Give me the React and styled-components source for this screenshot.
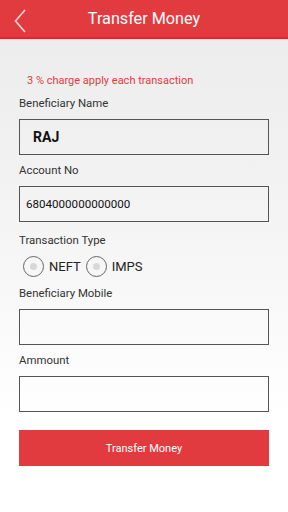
import styled, { createGlobalStyle } from "styled-components";

const Global = createGlobalStyle`
  html, body {
    margin: 0;
    padding: 0;
    font-family: Roboto, "Liberation Sans", sans-serif;
  }
`;

const Page = styled.div`
  width: 288px;
  height: 512px;
  background: linear-gradient(#ebebeb 0px, #f3f3f3 200px, #ffffff 420px);
  overflow: hidden;
`;

const Header = styled.div`
  height: 37px;
  background-color: #e23b3f;
  border-bottom: 2px solid #cf2e32;
  display: flex;
  align-items: center;
  position: relative;
`;

const Back = styled.svg`
  position: absolute;
  left: 13px;
  top: 9px;
`;

const Title = styled.h1`
  margin: 0;
  flex: 1;
  text-align: center;
  color: #fff;
  font-size: 16.2px;
  font-weight: 400;
`;

const Form = styled.div`
  padding: 0 19px;
  display: flex;
  flex-direction: column;
`;

const Notice = styled.p`
  margin: 35px 0 0 8px;
  color: #e23b3f;
  font-size: 11px;
  line-height: 13px;
`;

const Label = styled.label`
  color: #333;
  font-size: 11.4px;
  line-height: 13px;
  margin-top: ${(p) => p.top}px;
`;

const Field = styled.div`
  box-sizing: border-box;
  height: 36px;
  margin-top: 9px;
  border: 1.5px solid #555;
  display: flex;
  align-items: center;
  padding-left: ${(p) => (p.bold ? 13 : 6)}px;
  font-size: ${(p) => (p.bold ? 14 : 11.6)}px;
  font-weight: ${(p) => (p.bold ? 700 : 400)};
  color: #111;
`;

const Radios = styled.div`
  display: flex;
  align-items: center;
  gap: 5px;
  margin: 9px 0 0 4px;
`;

const Radio = styled.span`
  display: flex;
  align-items: center;
  gap: 5px;
  font-size: 13px;
  color: #222;
`;

const Circle = styled.span`
  box-sizing: border-box;
  width: 21px;
  height: 21px;
  border-radius: 50%;
  border: 1.5px solid #666;
  display: flex;
  align-items: center;
  justify-content: center;
  &::after {
    content: "";
    width: 7px;
    height: 7px;
    border-radius: 50%;
    background: #d8d8d8;
  }
`;

const Button = styled.button`
  margin-top: 18px;
  height: 36px;
  border: none;
  background-color: #e23b3f;
  color: #fff;
  font-family: inherit;
  font-size: 11px;
`;

export default function App() {
  return (
    <Page>
      <Global />
      <Header>
        <Back width="14" height="24" viewBox="0 0 14 24">
          <path d="M12 1 L2.5 12 L12 23" stroke="#f8d8d8" strokeWidth="1.6" fill="none" />
        </Back>
        <Title>Transfer Money</Title>
      </Header>
      <Form>
        <Notice>3 % charge apply each transaction</Notice>
        <Label top={10}>Beneficiary Name</Label>
        <Field bold>RAJ</Field>
        <Label top={9}>Account No</Label>
        <Field>6804000000000000</Field>
        <Label top={12}>Transaction Type</Label>
        <Radios>
          <Radio><Circle />NEFT</Radio>
          <Radio><Circle />IMPS</Radio>
        </Radios>
        <Label top={10}>Beneficiary Mobile</Label>
        <Field />
        <Label top={9}>Ammount</Label>
        <Field />
      </Form>
      <Form>
        <Button>Transfer Money</Button>
      </Form>
    </Page>
  );
}
